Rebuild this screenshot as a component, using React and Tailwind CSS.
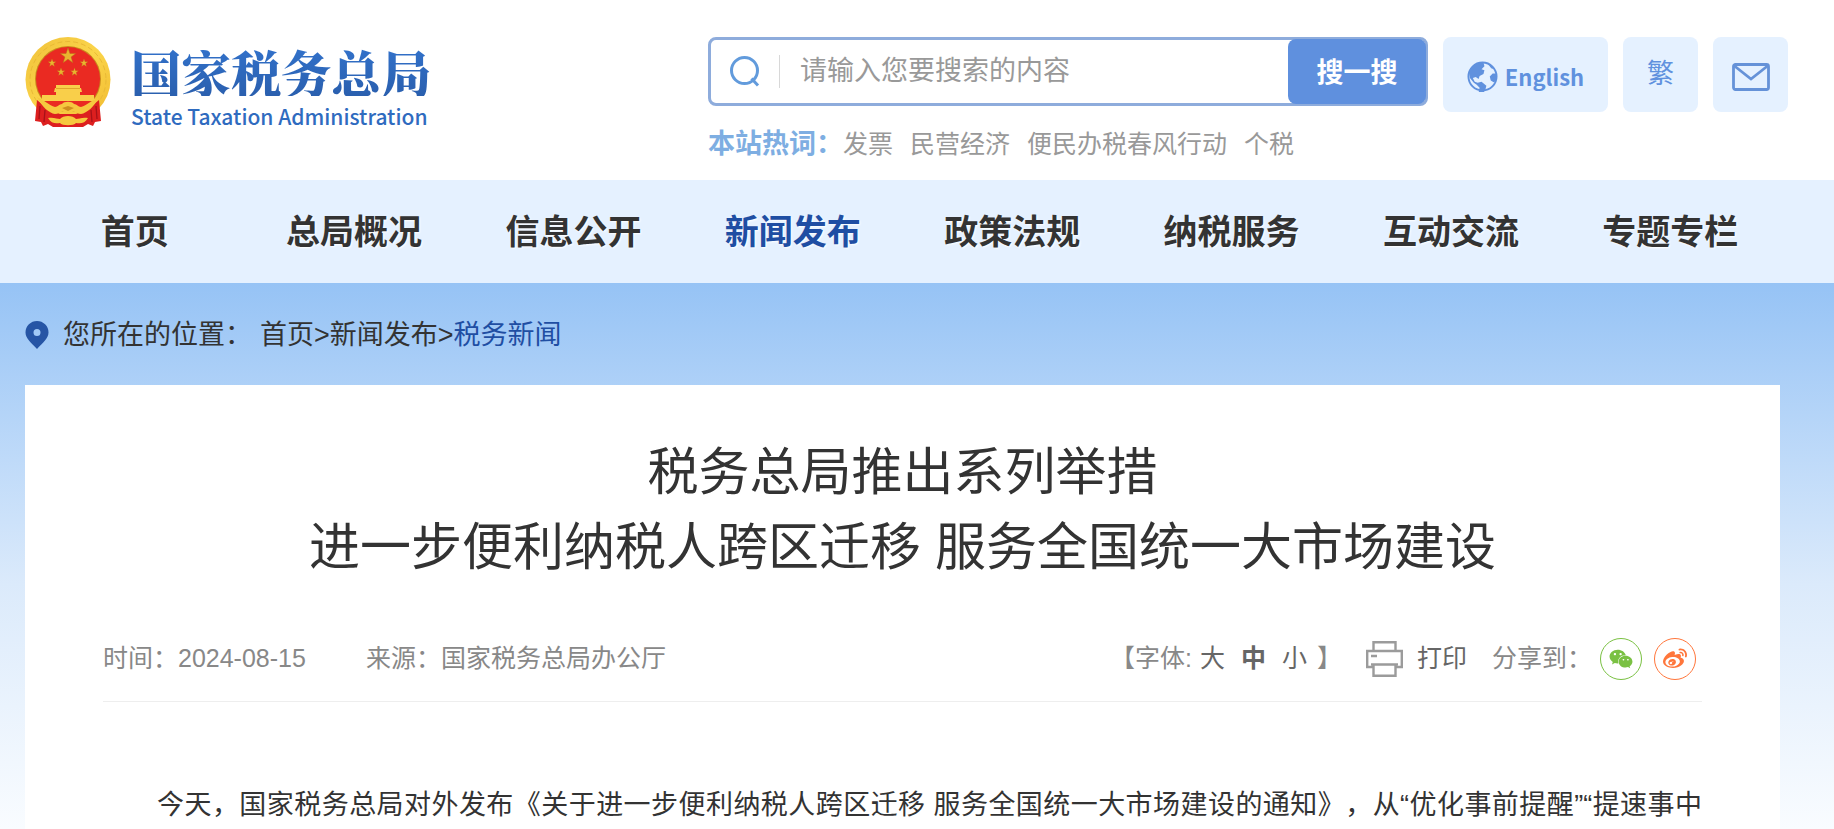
import { FaWeibo, FaWeixin } from 'react-icons/fa6';

const navItems = [
  '首页',
  '总局概况',
  '信息公开',
  '新闻发布',
  '政策法规',
  '纳税服务',
  '互动交流',
  '专题专栏',
];

const hotWords = ['发票', '民营经济', '便民办税春风行动', '个税'];

const STAR = '0,-10 2.4,-3.1 9.5,-3.1 3.8,1.2 5.9,8.1 0,4 -5.9,8.1 -3.8,1.2 -9.5,-3.1 -2.4,-3.1';

function Emblem() {
  return (
    <svg viewBox="0 0 86 90" className="h-[90px] w-[86px] shrink-0" aria-hidden="true">
      <defs>
        <linearGradient id="gold" x1="0" y1="0" x2="1" y2="1">
          <stop offset="0" stopColor="#f0c13a" />
          <stop offset="0.5" stopColor="#fbd54a" />
          <stop offset="1" stopColor="#f0b92f" />
        </linearGradient>
      </defs>
      <circle cx="43" cy="42.5" r="42.5" fill="url(#gold)" />
      <circle cx="43" cy="42.5" r="38" fill="none" stroke="#e9b935" strokeWidth="1" strokeDasharray="5 3" />
      <circle cx="43" cy="42" r="33" fill="#c98a1c" />
      <circle cx="43" cy="42" r="32" fill="#ea2a22" />
      <g fill="#e9b52f" stroke="#b9651a" strokeWidth="0.6">
        <polygon points={STAR} transform="translate(43 19) scale(.82)" />
        <polygon points={STAR} transform="translate(27 26) scale(.42)" />
        <polygon points={STAR} transform="translate(59 26) scale(.42)" />
        <polygon points={STAR} transform="translate(36 35) scale(.42)" />
        <polygon points={STAR} transform="translate(49.5 35) scale(.42)" />
      </g>
      <path
        d="M31 48h24v3h1l1 4h-2v3h14v4h1v2H16v-2h1v-4h14v-3h-2l1-4h1z"
        fill="#f9cf4a"
      />
      <path d="M31 51.5h24" stroke="#d99b24" strokeWidth="0.8" />
      <path
        d="M12 63l12 10 11 4h16l11-4 12-10 2 21-6 1-2 4-5-2-5 3H28l-5-3-5 2-2-4-6-1z"
        fill="#dd1f1f"
      />
      <path d="M15 69l-1 13M20 73l-1 12M71 69l1 13M66 73l1 12" stroke="#a81218" strokeWidth="1.3" />
      <path
        d="M12 60c8 4 12 8 18 10 3 0 4-3 7-3 2-3 10-3 12 0 3 0 4 3 7 3 6-2 10-6 18-10-5 10-12 16-18 17-4 0-6-4-9-2l-4 2-4-2c-3-2-5 2-9 2-6-1-13-7-18-17z"
        fill="#f6c83f"
      />
      <path d="M37 71l6-2 6 2-6 3z" fill="#cf8f1f" />
      <path d="M23 81c6-1 9 1 12 1 3-4 13-4 16 0 3 0 6-2 12-1-3 5-7 6-12 5-2 3-14 3-16 0-5 1-9 0-12-5z" fill="#f6c83f" />
    </svg>
  );
}

function SearchIcon() {
  return (
    <svg viewBox="0 0 30 32" className="h-8 w-[30px] shrink-0" fill="none" stroke="#629bdc" strokeWidth="3" aria-hidden="true">
      <circle cx="14.5" cy="14.5" r="13" />
      <path d="M21.500 22.500l6.500 7" />
    </svg>
  );
}

function GlobeIcon() {
  return (
    <svg viewBox="0 0 32 32" className="size-[31px]" aria-hidden="true">
      <circle cx="16" cy="16" r="14.5" fill="none" stroke="#6091de" strokeWidth="2" />
      <path
        d="M17 1.500l1 4-3 3 3 1-1 4-4 2-1 3-3-2-3 1 2 4 3 1 4-1 5 4-1 4-3 5-4-2 1-5-3-3-3-2-4-5-1-6C3 6 10 1 17 1.500z"
        fill="#6091de"
      />
      <path d="M30.500 13l-4 0-3 3 1 4 3 2 2-1c1-3 1.500-5 1-8zM22 3.500l3 4 3 1c-1-2-3-4-6-5z" fill="#6091de" />
    </svg>
  );
}

function MailIcon() {
  return (
    <svg viewBox="0 0 38 28" className="h-7 w-[38px]" fill="none" stroke="#6592d8" strokeWidth="2.8" aria-hidden="true">
      <rect x="1.5" y="1.5" width="35" height="25" rx="2" />
      <path d="M2.500 3L19 16 35.500 3" />
    </svg>
  );
}

function PinIcon() {
  return (
    <svg viewBox="0 0 24 28" className="h-7 w-6 shrink-0" aria-hidden="true">
      <path
        fillRule="evenodd"
        d="M12 0a11.500 11.500 0 0 1 11.500 11.500C23.500 17.500 17.500 22 12 28 6.500 22 .5 17.500 .5 11.500A11.500 11.500 0 0 1 12 0zm0 8a3.500 3.500 0 1 0 0 7 3.500 3.500 0 0 0 0-7z"
        fill="#2655a5"
      />
    </svg>
  );
}

function PrinterIcon() {
  return (
    <svg viewBox="0 0 37 36" className="h-9 w-[37px]" fill="none" stroke="#9b9b9b" strokeWidth="2.4" aria-hidden="true">
      <path d="M7.500 9.500V1.200h22v8.300" />
      <path d="M7.500 26H1.200V10h34.600v16h-6.300" />
      <path d="M5 23.500h27M7.500 23.500v11.300h22V23.500M5 15h6" />
    </svg>
  );
}

function Header() {
  return (
    <header className="flex h-[180px] items-start justify-between pr-[46px] pl-[25px] pt-[37px]">
      <a href="#" className="flex items-start gap-5 text-[#2f6bbf]">
        <Emblem />
        <span className="flex flex-col pt-[9px]">
          <span className="bg-linear-to-b from-[#3272cb] to-[#2a5fae] bg-clip-text font-['Noto_Serif_CJK_SC','Noto_Sans_CJK_SC',serif] text-[50px] leading-[50px] font-black text-transparent">
            国家税务总局
          </span>
          <span className="mt-2 font-['Noto_Sans_CJK_SC'] text-[21px] leading-6 font-medium">
            State Taxation Administration
          </span>
        </span>
      </a>

      <div className="flex items-start gap-[15px]">
        <div>
          <form className="flex h-[69px] w-[720px] items-stretch rounded-lg border-[3px] border-[#8eacdc]">
            <label htmlFor="keyword" className="flex items-center pl-[19px]">
              <SearchIcon />
              <span className="ml-[19px] h-[33px] w-px bg-[#d8d8d8]" />
            </label>
            <input
              id="keyword"
              type="text"
              placeholder="请输入您要搜索的内容"
              className="min-w-0 flex-1 px-5 text-[27px] text-[#333] outline-none placeholder:text-[#999]"
            />
            <button type="button" className="-my-px -mr-px w-[138px] rounded-lg bg-[#5f90de] pt-1 text-[27px] font-bold text-white">
              搜一搜
            </button>
          </form>
          <div className="mt-5 flex items-center gap-[17px] text-[25px] leading-9 text-[#999]">
            <div className="flex items-center">
              <strong className="text-[27px] text-[#7eaee2]">本站热词：</strong>
              <a href="#">{hotWords[0]}</a>
            </div>
            {hotWords.slice(1).map((word) => (
              <a href="#" key={word}>
                {word}
              </a>
            ))}
          </div>
        </div>
        <a
          href="#"
          className="flex h-[75px] w-[165px] items-center justify-center gap-[7px] rounded-lg bg-[#e5f1ff] pt-1 font-['Noto_Sans_CJK_SC'] text-[22px] font-bold text-[#6091de]"
        >
          <GlobeIcon />
          English
        </a>
        <a href="#" className="flex size-[75px] items-center justify-center rounded-lg bg-[#e5f1ff] text-[27px] text-[#6091de]">
          繁
        </a>
        <a href="#" aria-label="邮箱" className="flex size-[75px] items-center justify-center rounded-lg bg-[#e5f1ff] pt-1">
          <MailIcon />
        </a>
      </div>
    </header>
  );
}

function Nav() {
  return (
    <nav className="grid h-[103px] grid-cols-8 items-center bg-[#e5f1ff] pt-0.5 pr-[54px] pl-[25px]">
      {navItems.map((item) => (
        <a
          href="#"
          key={item}
          className={`text-center text-[34px] font-bold text-shadow-[1px_1px_2px_#fff] ${
            item === '新闻发布' ? 'text-[#1f4ea3]' : 'text-[#333]'
          }`}
        >
          {item}
        </a>
      ))}
    </nav>
  );
}

function ArticleMeta() {
  return (
    <div className="mt-[33px] flex h-[84px] items-center justify-between border-b border-[#eee] pb-0.5 text-[25px] text-[#888]">
      <div className="flex gap-[60px]">
        <span>时间：2024-08-15</span>
        <span>来源：国家税务总局办公厅</span>
      </div>
      <div className="flex items-center pr-[6px] [text-spacing-trim:space-all]">
        <span>【字体:</span>
        <button type="button" className="ml-2 text-[#666]">大</button>
        <button type="button" className="ml-4 font-bold text-[#666]">中</button>
        <button type="button" className="ml-4 text-[#666]">小</button>
        <span className="ml-2.5">】</span>
        <button type="button" className="ml-6 flex items-center gap-[14px] text-[#666]">
          <PrinterIcon />
          打印
        </button>
        <span className="ml-[25px]">分享到：</span>
        <a
          href="#"
          aria-label="微信"
          className="ml-2 flex size-[42px] items-center justify-center rounded-full border border-[#7ac143] text-[#7ac143]"
        >
          <FaWeixin className="size-6" />
        </a>
        <a
          href="#"
          aria-label="微博"
          className="ml-3 flex size-[42px] items-center justify-center rounded-full border border-[#ff763b] text-[#ff763b]"
        >
          <FaWeibo className="size-6" />
        </a>
      </div>
    </div>
  );
}

export default function App() {
  return (
    <div className="flex min-h-screen flex-col bg-white font-['Liberation_Sans','Noto_Sans_CJK_SC',sans-serif] text-[#333]">
      <Header />
      <Nav />
      <main className="flex flex-1 flex-col bg-linear-to-b from-[#96c3f5] via-[#dbeafb] via-55% to-[#f9fcff] pr-[54px] pl-[25px]">
        <div className="flex h-[102px] items-center gap-[14px] pt-0.5 text-[27px]">
          <PinIcon />
          <div className="flex items-center gap-2">
            <span>您所在的位置：</span>
            <span>
              <a href="#">首页</a>&gt;<a href="#">新闻发布</a>&gt;
              <a href="#" className="text-[#1f4ea3]">税务新闻</a>
            </span>
          </div>
        </div>
        <article className="flex-1 bg-white px-[78px] pt-[50px]">
          <h1 className="text-center text-[51px] leading-[75px]">
            税务总局推出系列举措
            <br />
            进一步便利纳税人跨区迁移 服务全国统一大市场建设
          </h1>
          <ArticleMeta />
          <p className="mt-[79px] indent-[2em] text-[27px] leading-[48px] [text-align-last:justify] [text-spacing-trim:space-all]">
            今天，国家税务总局对外发布《关于进一步便利纳税人跨区迁移 服务全国统一大市场建设的通知》，从“优化事前提醒”“提速事中
          </p>
        </article>
      </main>
    </div>
  );
}
